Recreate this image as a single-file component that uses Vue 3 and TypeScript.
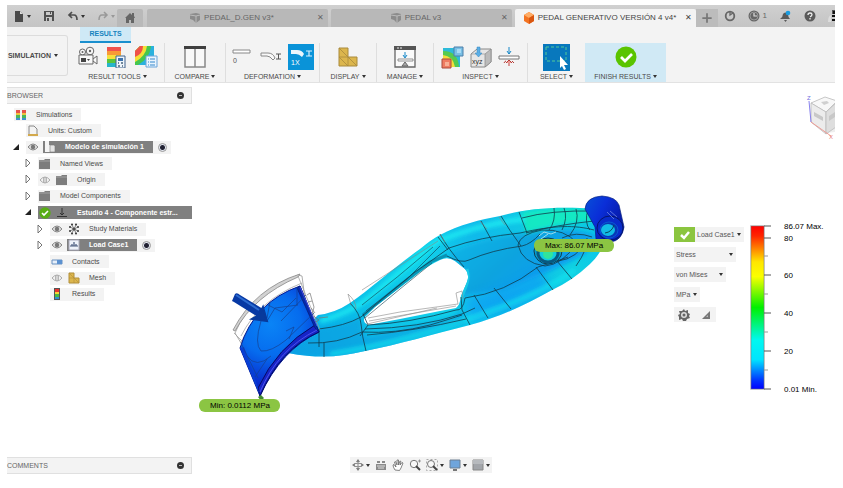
<script setup lang="ts">
import { ref } from 'vue'

interface Tool { icon: string; w: number; label: string; active?: boolean }
interface Group { name: string; cls: string; tools: Tool[] }
interface Node {
  text: string; depth: number; icon: string
  open?: 'closed' | 'open'; eye?: 'on' | 'off'; check?: boolean; dark?: boolean; radio?: boolean
}

const art: Record<string, string> = {
  file: '<path d="M2 1h5l3 3v8H2z" fill="#4a4a4a"/><path d="M7 1v3h3z" fill="#ddd"/>',
  save: '<path d="M1 1h10v10H1z" fill="#505050"/><path d="M3 2h6v3H3zM3 7h6v4H3z" fill="#c9c9c9"/><path d="M4 8h2v3H4zM7 2h1v2H7z" fill="#505050"/>',
  undo: '<path d="M5 2 2 5l3 3M2 5h5q3 0 3 5" fill="none" stroke="#4d4d4d" stroke-width="1.7"/>',
  redo: '<path d="M7 2l3 3-3 3M10 5H5q-3 0-3 5" fill="none" stroke="#999" stroke-width="1.5"/>',
  home: '<path d="M1 6 6 1l2 2V1h2v3l1 2h-1v5H7V8H5v3H2V6z" fill="#666"/>',
  cube: '<path d="M1 2 7 1l4 1v6l-4 3-3-3-3-1z" fill="#8b8b8b"/><path d="M1 3l6 1v7M7 4l4-1" stroke="#bbb" fill="none"/>',
  orange: '<path d="M6 0l5 3v6l-5 3-5-3V3z" fill="#f37321"/><path d="M6 0l5 3-5 3-5-3z" fill="#ffad66"/><path d="M6 6l5-3v6l-5 3z" fill="#d95610"/>',
  plus: '<path d="M6 2v8M2 6h8" stroke="#777" stroke-width="1.5"/>',
  job: '<circle cx="6" cy="6" r="4.3" fill="none" stroke="#666" stroke-width="1.8"/><path d="M6 1v4l3-2" stroke="#666" fill="none" stroke-width="1.3"/>',
  clock: '<circle cx="6" cy="6" r="5.5" fill="#666"/><circle cx="6" cy="6" r="4" fill="none" stroke="#bbb" stroke-width=".6"/><path d="M6 3v3h3" stroke="#ddd" fill="none" stroke-width="1.2"/>',
  bell: '<path d="M1 9q3-2 3-5 2-3 5 0 0 3 2 5zM5 10h3l-1.500 2z" fill="#5a5a5a"/><circle cx="9" cy="3" r="2.300" fill="#1a9ce0"/>',
  help: '<circle cx="6" cy="6" r="5.500" fill="#5a5a5a"/><path d="M4 5q0-2 2-2t2 1.500Q8 6 6 6.800M6 8v1.500" stroke="#eee" stroke-width="1.300" fill="none"/>',
  avatar: '<path d="M4 0h3v4H4z" fill="#555"/><path d="M5 1h2v3H5zM4 5h3v2H4zM4 9h3v2H4z" fill="#111"/><path d="M0 12q0-6 3-7v7z" fill="#ddd"/>',
  camera: '<g fill="#f8f8f8" stroke="#666"><circle cx="4.500" cy="6" r="3"/><circle cx="12" cy="5" r="3.800"/><path d="M1 9h14v9H1zM15 13l4-3v8l-4-3"/></g><circle cx="4.500" cy="6" r="1" fill="#666"/><circle cx="12" cy="5" r="1.200" fill="#666"/><path d="M3 12h5v4H3zM9 13h3l-1.500 2z" fill="#444"/>',
  resultcalc: '<path d="M1 1h14v4H1z" fill="#f0524d"/><path d="M1 5h14v4H1z" fill="#f89a37"/><path d="M1 9h14v5H1z" fill="#f7e03d"/><path d="M1 13h14v4H1z" fill="#5ac53a"/><path d="M1 17h14v4H1z" fill="#27b5c9"/><path d="M10 10h9v12h-9z" fill="#eef5fb" stroke="#42638d"/><path d="M12 12h5v3h-5z" fill="#3e73ae"/><path d="M12 17h1m2 0h2m-5 3h2m2 0h1" stroke="#47617c" stroke-width="1.300"/>',
  contour: '<path d="M1 6 6 1h14v14l-5 5H1z" fill="#2ab1dd"/><path d="M1 6 6 1h11q-1 12-13 19H1z" fill="#46c64e"/><path d="M1 6 6 1h7Q12 11 1 17z" fill="#f5df35"/><path d="M1 6l5-5h3Q9 9 1 12z" fill="#ef5149"/><path d="M12 11h11v11H12z" fill="#e9f4fd" stroke="#6aa5da"/><path d="M14 14h1m1 0h5m-7 3h1m1 0h5m-7 3h1m1 0h5" stroke="#3387cc"/>',
  compare: '<path d="M1 2h20v19H1zM11 2v19" fill="#f8f8f8" stroke="#888" stroke-width="1.500"/><path d="M0 0h22v3H0z" fill="#3f3f3f"/>',
  def0: '<path d="M1 4h17v3H1z" fill="#fff" stroke="#888"/><text x="1" y="17" font-size="7" fill="#555">0</text>',
  def1: '<path d="M1 7h7q5 0 7 5l-2 2q-3-4-6-4H1z" fill="#f8f8f8" stroke="#888"/><path d="M16 8h5M16 13h5M18.500 8v5" stroke="#555"/>',
  defx: '<path d="M3 6h6q5 0 7 4l-2 3q-3-3-6-3H3z" fill="#eaf5fc"/><path d="M18 7h6M18 12h6M21 7v5" stroke="#d8effd" stroke-width="1.200"/><text x="3" y="21" font-size="7" fill="#fff">1X</text>',
  display: '<path d="M1 1h9v9h9v9H1z" fill="#dcb64d" stroke="#a98a3d"/><path d="M1 10h9v9M1 1l9 9 9 9M1 10l9 9" fill="none" stroke="#a98a3d" stroke-width=".8"/>',
  manage: '<path d="M1 1h20v20H1z" fill="#fafafa" stroke="#666" stroke-width="1.300"/><path d="M0 0h22v4H0z" fill="#555"/><path d="M3 2h2m1 0h2" stroke="#eee"/><path d="M4 13h15v2H4z" fill="#fff" stroke="#777" stroke-width=".8"/><path d="M11 6v5m-2-2 2 3 2-3" stroke="#1687c7" fill="none"/><path d="m11 16 3 4H8z" fill="#aaa" stroke="#666"/>',
  region: '<path d="M2 2h17v19H2z" fill="#2dbbd9"/><path d="M2 5q15 0 16 16H2z" fill="#55ca51"/><path d="M2 9q10 1 12 12H2z" fill="#f3de3c"/><path d="M13 1h9v9h-9z" fill="#79bfe5" stroke="#4c7fa9"/><path d="M1 13h9v9H1z" fill="#ef7c62" stroke="#a94b3b"/><path d="M4 16h4v4H4z" fill="#f8b095"/><path d="M16 3h4v4h-4z" fill="#a8dbf5"/>',
  xyz: '<path d="M1 8 7 3h14v13l-6 5H1z" fill="#e6e6e6" stroke="#888"/><path d="M15 8v13l6-5V3z" fill="#bbb" stroke="#888" stroke-width=".7"/><path d="M1 8h14" stroke="#999" stroke-width=".7"/><path d="M7 1h3v6h2l-3.500 4L5 7h2z" fill="#5aaee6" stroke="#3585bf" stroke-width=".5"/><text x="2" y="18" font-size="7" fill="#333">xyz</text>',
  probe: '<path d="M1 10h20v3H1z" fill="#fff" stroke="#777"/><path d="M11 1v7M9 5l2 3 2-3" stroke="#1687c7" fill="none"/><path d="M11 20v-5" stroke="#c13d38"/><path d="m8 17 3-3 3 3" fill="#ee9a94" stroke="#b53d38"/><path d="M6 17q1-2 2-2m6 0 2 2" stroke="#b53d38" fill="none"/>',
  select: '<path d="M0 0h27v27H0z" fill="#0878bd"/><path d="M3 3h20v14H3z" fill="none" stroke="#53c998" stroke-dasharray="3 2"/><path d="m17 12 8 9h-4l2 4-2 1-2-4-2 2z" fill="#fff"/>',
  finish: '<circle cx="11" cy="11" r="10.500" fill="#5ac400"/><path d="m6 11 4 4 7-7" stroke="#fff" stroke-width="2.700" fill="none"/>',
  sim: '<path d="M1 1h10v10H1z" fill="#888"/><path d="M1 1h4v3H1zM7 1h4v3H7z" fill="#e65349"/><path d="M1 4h4v2H1zM7 4h4v2H7z" fill="#f0c13e"/><path d="M1 6h4v3H1zM7 6h4v3H7z" fill="#4bb758"/><path d="M1 9h4v2H1zM7 9h4v2H7z" fill="#408fce"/><path d="M5 1h2v10H5z" fill="#f3f3f3"/>',
  units: '<path d="M2 1h5l3 3v6H2z" fill="#f3f3f3" stroke="#888"/><path d="M1 9h10v2H1z" fill="#d3a94c"/>',
  model: '<path d="M1 0h4v4h1v7H1z" fill="#f4f4f4"/><path d="M6 4h4l1 1v6H6z" fill="#e4e4e4" stroke="#777" stroke-width=".6"/>',
  folder: '<path d="M0 2h5l1-1h5v10H0z" fill="#7d7d7d"/><path d="M0 3h11" stroke="#b4b4b4" stroke-width=".7"/>',
  study: '<path d="M1 9h10v1H1z" fill="#333"/><path d="M6 1v7M4 6l2 2 2-2" stroke="#333" fill="none"/>',
  material: '<g fill="#333"><circle cx="6" cy="6" r="1.500"/><circle cx="2" cy="4" r="1"/><circle cx="2" cy="8" r="1"/><circle cx="10" cy="4" r="1"/><circle cx="10" cy="8" r="1"/><circle cx="4" cy="1.500" r="1"/><circle cx="8" cy="1.500" r="1"/><circle cx="4" cy="10.500" r="1"/><circle cx="8" cy="10.500" r="1"/></g><path d="m2 4 8 4m0-4-8 4m2-6 4 8m0-8-4 8" stroke="#555" stroke-width=".7"/>',
  load: '<path d="M1 1h10v10H1z" fill="#eef2fa" stroke="#aab"/><path d="M2 7h8M6 3v4M4 5v2m4-2v2" stroke="#47587c" stroke-width="1.200"/>',
  contact: '<path d="M1 4h10v4H1z" fill="#e6effa" stroke="#6990bf"/><path d="M6 4h5v4H6z" fill="#5b91d0"/>',
  mesh: '<path d="M1 1h5v5h5v5H1z" fill="#dcb64d" stroke="#b28f3b"/><path d="m1 1 10 10M6 6v5M1 6h5" stroke="#b28f3b" stroke-width=".6"/>',
  results: '<path d="M3 0h6v12H3z" fill="#555"/><path d="M4 1h4v3H4z" fill="#e9332c"/><path d="M4 4h4v2H4z" fill="#f5d436"/><path d="M4 6h4v3H4z" fill="#4bbb41"/><path d="M4 9h4v2H4z" fill="#2f91d0"/>',
  on: '<path d="M1 6q5-6 10 0-5 6-10 0z" fill="#ddd" stroke="#888"/><circle cx="6" cy="6" r="2.200" fill="#777"/>',
  off: '<path d="M1 6q5-6 10 0-5 6-10 0z" fill="none" stroke="#999" stroke-width=".8"/><path d="M4.500 4v4M6 3v6M7.500 4v4" stroke="#999" stroke-width=".7"/>',
  check: '<circle cx="6" cy="6" r="5.700" fill="#58ad14"/><path d="m3 6 2 2 4-4" stroke="#fff" stroke-width="1.600" fill="none"/>',
  closed: '<path d="m3 2 4 4-4 4z" fill="#fff" stroke="#666" stroke-width=".9"/>',
  open: '<path d="M8 3v6H2z" fill="#222"/>',
  orbit: '<path d="M6 0 8 3H4zM6 12l2-3H4zM0 6l3-2v4zM12 6 9 4v4z" fill="#777"/><ellipse cx="6" cy="6" rx="4" ry="1.800" fill="none" stroke="#888"/><path d="M6 2v8" stroke="#888"/>',
  look: '<path d="M1 5h10v6H1zM2 2h3v2H2zM7 2h3v2H7z" fill="#8a8a8a"/><path d="M2 7h8M3 9h6" stroke="#ddd"/>',
  hand: '<path d="M3 11Q1 8 1 6l1-.5L4 8 2.500 3l1-.5L5 6V1h1.500v5L8 2l1 .5L8 6l2-2.500 1 .5-2 5-1.500 2.500z" fill="#fff" stroke="#666" stroke-width=".8"/>',
  zoom: '<circle cx="5" cy="5" r="3.700" fill="#f8f8f8" stroke="#777"/><path d="m7 7 4 4" stroke="#444" stroke-width="2"/><path d="M9 2h3M10.500.5v3" stroke="#888" stroke-width=".8"/>',
  fit: '<path d="M.5.5h11v11H.5z" fill="none" stroke="#aaa" stroke-dasharray="2 2"/><circle cx="5" cy="5" r="3.500" fill="#f8f8f8" stroke="#777"/><path d="m7 7 4 4" stroke="#444" stroke-width="2"/>',
  screen: '<path d="M1 1h10v8H1z" fill="#6fa5dc" stroke="#6d7f92"/><path d="M4 10h4v2H4z" fill="#777"/>',
  grid: '<path d="M1 1h10v10H1z" fill="#a2a5aa" stroke="#888"/><path d="M1 1h10v4H1z" fill="#b7babe"/>',
  gear: '<path d="m6 0 1 2 3-1 0 3 2 1-1 2 1 2-3 1-1 2H5L4 10l-3 1 0-3-1-2 2-1-1-3 3 0z" fill="#666"/><circle cx="6" cy="6" r="3" fill="#ddd"/><circle cx="6" cy="6" r="1.500" fill="#666"/>',
  slope: '<path d="M10 2v8H2z" fill="#777"/><path d="M8 6v2H6z" fill="#bbb"/>',
}

const groups: Group[] = [
  { name: 'RESULT TOOLS', cls: 'g-wide', tools: [
    { icon: 'camera', w: 22, label: 'Animate' }, { icon: 'resultcalc', w: 22, label: 'Result details' }, { icon: 'contour', w: 24, label: 'Contours' }] },
  { name: 'COMPARE', cls: 'g-61', tools: [{ icon: 'compare', w: 22, label: 'Compare' }] },
  { name: 'DEFORMATION', cls: 'g-wide', tools: [
    { icon: 'def0', w: 22, label: 'Undeformed' }, { icon: 'def1', w: 22, label: 'Actual' }, { icon: 'defx', w: 26, label: 'Adjusted 1X', active: true }] },
  { name: 'DISPLAY', cls: 'g-57', tools: [{ icon: 'display', w: 20, label: 'Mesh display' }] },
  { name: 'MANAGE', cls: 'g-57', tools: [{ icon: 'manage', w: 22, label: 'Manage' }] },
  { name: 'INSPECT', cls: 'g-wide', tools: [
    { icon: 'region', w: 23, label: 'Min and max' }, { icon: 'xyz', w: 22, label: 'Reactions' }, { icon: 'probe', w: 22, label: 'Probe' }] },
  { name: 'SELECT', cls: 'g-57 last', tools: [{ icon: 'select', w: 27, label: 'Select' }] },
  { name: 'FINISH RESULTS', cls: 'g-finish last', tools: [{ icon: 'finish', w: 22, label: 'Finish results' }] },
]

const nodes: Node[] = [
  { text: 'Simulations', depth: 0, icon: 'sim' },
  { text: 'Units: Custom', depth: 1, icon: 'units' },
  { text: 'Modelo de simulación 1', depth: 1, icon: 'model', open: 'open', eye: 'on', dark: true, radio: true },
  { text: 'Named Views', depth: 2, icon: 'folder', open: 'closed' },
  { text: 'Origin', depth: 2, icon: 'folder', open: 'closed', eye: 'off' },
  { text: 'Model Components', depth: 2, icon: 'folder', open: 'closed' },
  { text: 'Estudio 4 - Componente estr...', depth: 2, icon: 'study', open: 'open', check: true, dark: true },
  { text: 'Study Materials', depth: 3, icon: 'material', open: 'closed', eye: 'on' },
  { text: 'Load Case1', depth: 3, icon: 'load', open: 'closed', eye: 'on', dark: true, radio: true },
  { text: 'Contacts', depth: 3, icon: 'contact' },
  { text: 'Mesh', depth: 3, icon: 'mesh', eye: 'off' },
  { text: 'Results', depth: 3, icon: 'results' },
]

const navTools = [
  { icon: 'orbit', label: 'Orbit', more: true }, { icon: 'look', label: 'Look at' }, { icon: 'hand', label: 'Pan' },
  { icon: 'zoom', label: 'Zoom' }, { icon: 'fit', label: 'Fit', more: true },
  { icon: 'screen', label: 'Display settings', more: true }, { icon: 'grid', label: 'Grid settings', more: true },
]

const loadCase = ref('Load Case1')
const quantity = ref('Stress')
const measure = ref('von Mises')
const unit = ref('MPa')

const majorTicks = [226, 238, 275, 313, 351, 389]
const minorTicks = [256, 294, 332, 370]
const scale = [
  { y: 226, t: '86.07 Max.' }, { y: 238, t: '80' }, { y: 275, t: '60' },
  { y: 313, t: '40' }, { y: 351, t: '20' }, { y: 389, t: '0.01 Min.' },
]
</script>

<template>
  <div class="app">
    <header class="tabs">
      <div class="quick">
        <button aria-label="File"><svg class="i12" viewBox="0 0 12 12" v-html="art.file" /><i class="caret" /></button>
        <button aria-label="Save"><svg class="i12" viewBox="0 0 12 12" v-html="art.save" /></button>
        <button aria-label="Undo"><svg class="i12" viewBox="0 0 12 12" v-html="art.undo" /><i class="caret" /></button>
        <button aria-label="Redo"><svg class="i12" viewBox="0 0 12 12" v-html="art.redo" /><i class="caret pale" /></button>
      </div>
      <button class="home" aria-label="Home"><svg class="i12" viewBox="0 0 12 12" v-html="art.home" /></button>
      <div class="tab"><svg class="i12" viewBox="0 0 12 12" v-html="art.cube" /><span>PEDAL_D.GEN v3*</span><button class="close" aria-label="Close PEDAL_D.GEN">✕</button></div>
      <div class="tab"><svg class="i12" viewBox="0 0 12 12" v-html="art.cube" /><span>PEDAL v3</span><button class="close" aria-label="Close PEDAL">✕</button></div>
      <div class="tab current"><svg class="i12" viewBox="0 0 12 12" v-html="art.orange" /><span>PEDAL GENERATIVO VERSIÓN 4 v4*</span><button class="close" aria-label="Close PEDAL GENERATIVO">✕</button></div>
      <button class="add" aria-label="New design"><svg class="i14" viewBox="0 0 12 12" v-html="art.plus" /></button>
      <div class="status">
        <button aria-label="Extensions"><svg class="i12" viewBox="0 0 12 12" v-html="art.job" /></button>
        <button aria-label="Job status"><svg class="i12" viewBox="0 0 12 12" v-html="art.clock" />1</button>
        <button aria-label="Notifications"><svg class="i12" viewBox="0 0 12 12" v-html="art.bell" /></button>
        <button aria-label="Help"><svg class="i12" viewBox="0 0 12 12" v-html="art.help" /></button>
        <button aria-label="Account"><svg class="avatar" viewBox="0 0 7 12" v-html="art.avatar" /></button>
      </div>
    </header>

    <section class="ribbon">
      <button class="workspace">SIMULATION<i class="caret" /></button>
      <div class="panel">
        <button class="mode">RESULTS</button>
        <div class="groups">
          <div v-for="g in groups" :key="g.name" class="group" :class="g.cls">
            <div class="tools">
              <button v-for="t in g.tools" :key="t.icon" :class="{ active: t.active }" :aria-label="t.label">
                <svg :width="t.w" :height="t.w" :viewBox="`0 0 ${t.w} ${t.w}`" v-html="art[t.icon]" />
              </button>
            </div>
            <button class="caption">{{ g.name }}<i class="caret" /></button>
          </div>
        </div>
      </div>
    </section>

    <main class="work">
      <aside class="side">
        <div class="bar">BROWSER<button class="dot" aria-label="Collapse browser" /></div>
        <ul class="tree">
          <li v-for="n in nodes" :key="n.text" :class="'d' + n.depth">
            <span v-if="n.depth > 0" class="twist"><svg v-if="n.open" class="i12" viewBox="0 0 12 12" v-html="art[n.open]" /></span>
            <div class="node" :class="{ full: n.check }">
              <button v-if="n.eye" class="eye" :aria-label="'Visibility of ' + n.text"><svg class="i12" viewBox="0 0 12 12" v-html="art[n.eye]" /></button>
              <span v-if="n.check" class="eye"><svg class="i12" viewBox="0 0 12 12" v-html="art.check" /></span>
              <button class="entry" :class="{ dark: n.dark }"><span class="pic"><svg class="i12" viewBox="0 0 12 12" v-html="art[n.icon]" /></span>{{ n.text }}</button>
              <input v-if="n.radio" type="radio" :name="'active' + n.depth" checked :aria-label="'Activate ' + n.text">
            </div>
          </li>
        </ul>
        <div class="bar comments">COMMENTS<button class="dot" aria-label="Expand comments" /></div>
      </aside>

      <section class="stage">
        <svg class="model" viewBox="192 84 482 368" role="img" aria-label="Stress plot of the pedal">
          <defs>
            <linearGradient id="body" x1="290" y1="350" x2="610" y2="215" gradientUnits="userSpaceOnUse">
              <stop offset="0" stop-color="#08a6ea" /><stop offset=".2" stop-color="#0bbce8" /><stop offset=".45" stop-color="#11d1ea" /><stop offset=".62" stop-color="#10b9ea" /><stop offset=".85" stop-color="#10d0e2" /><stop offset="1" stop-color="#08c0ec" />
            </linearGradient>
            <linearGradient id="web" x1="460" y1="240" x2="520" y2="310" gradientUnits="userSpaceOnUse">
              <stop offset="0" stop-color="#0db4e6" /><stop offset=".5" stop-color="#0ba4df" /><stop offset="1" stop-color="#0a9cf0" />
            </linearGradient>
            <radialGradient id="pad" cx="270" cy="325" r="62" gradientUnits="userSpaceOnUse">
              <stop offset="0" stop-color="#0a84f6" /><stop offset=".5" stop-color="#066cee" /><stop offset="1" stop-color="#0828cc" />
            </radialGradient>
            <linearGradient id="boss" x1="586" y1="205" x2="622" y2="225" gradientUnits="userSpaceOnUse">
              <stop offset="0" stop-color="#0848d8" /><stop offset=".4" stop-color="#0a2ed8" /><stop offset="1" stop-color="#0618a2" />
            </linearGradient>
            <filter id="soft"><feGaussianBlur stdDeviation="5" /></filter>
            <filter id="edge"><feGaussianBlur stdDeviation="2" /></filter>
            <clipPath id="shape"><path clip-rule="evenodd" d="M288 346 L318 316 Q335 314 350 304 C370 290 400 264 420 250 Q432 240 440 236 C460 225 480 221 500 217 C525 210 555 207 595 210 L605 238 Q603 253 590 265 Q572 282 552 291 C525 306 500 318 470 326 C430 336 400 345 365 352 C340 358 320 360 288 354Z M365 318 Q362 323 368 326 L400 320 L440 312 L456 309 Q460 306 461 297 L467 283 Q470 275 465 270 L455 262 Q448 257 440 261 Q427 267 415 277 L375 308Z" /></clipPath>
          </defs>

          <g clip-path="url(#shape)">
            <path d="M280 200H620V365H280Z" fill="url(#body)" />
            <path d="M318 330Q345 326 360 318L362 332 368 338 450 318 461 312 466 325 400 345 350 358 285 356Z" fill="#079fe0" opacity=".65" filter="url(#edge)" />
            <path d="M447 255Q490 236 530 234Q570 225 597 238L585 255 550 272 505 291 461 297 468 275Z" fill="url(#web)" filter="url(#edge)" />
            <path d="M465 300 506 289 540 272 552 291 515 308 470 323Z" fill="#0c98f6" opacity=".6" filter="url(#soft)" />
            <path d="M521 213Q555 207 590 210L596 222Q560 223 526 234Z" fill="#13f0bb" opacity=".8" filter="url(#edge)" />
            <path d="M320 322Q350 314 370 298L438 242Q480 225 525 220" fill="none" stroke="#20f4f4" stroke-width="5" opacity=".75" filter="url(#edge)" />
            <path d="M330 355Q370 349 410 338T485 314Q540 295 575 271" fill="none" stroke="#15e6ef" stroke-width="4" opacity=".8" filter="url(#edge)" />
            <path d="M363 316 400 286 430 263 447 256" fill="none" stroke="#057a9a" stroke-width="3" opacity=".65" />
            <path d="M467 270Q470 280 465 290L461 300" fill="none" stroke="#20dcea" stroke-width="3" opacity=".6" />
          </g>

          <g fill="none" stroke="#123b4c" stroke-width=".8">
            <path d="M319 330Q345 327 361 318Q388 295 415 273Q434 260 449 249Q480 238 520 234C555 226 575 226 594 231" />
            <path d="M308 344Q338 345 362 333Q395 335 430 326Q450 320 462 316" />
            <path d="M368 326Q410 324 456 311Q463 312 465 299Q505 294 538 268Q555 263 568 258" />
            <path d="M365 330Q420 329 462 315L475 309M367 336Q415 332 466 320" />
            <path d="M440 235Q448 250 464 268M438 238 448 251M481 222 492 242M501 217Q509 231 521 247M519 213 527 234M554 209Q556 222 549 231M564 209Q568 219 562 231M576 210Q580 223 570 236M588 210Q584 224 590 231" />
            <path d="M447 257Q462 265 469 261Q492 251 522 247Q531 245 540 235" />
            <path d="M522 219Q550 211 596 212M526 234Q555 226 594 222" />
            <path d="M461 298 462 311 470 326M474 296 488 319M494 289 511 310M536 268 553 291M557 262 572 280" />
            <path d="M350 304Q360 314 361 325 362 337 366 352M363 315 368 326 360 337M324 344V358M319 330V348" />
            <path d="M365 319 400 290 432 264M366 312 407 280 440 247M362 306Q397 279 433 248" stroke-width=".6" />
            <path d="M518 246Q520 235 542 231 565 230 577 244Q562 266 545 267 522 264 518 246M576 267Q588 250 587 239M558 262Q577 260 588 240M562 239Q576 232 592 238" />
          </g>
          <g fill="none" stroke="#888" stroke-width=".6">
            <path d="M362 291 438 242M351 306 348 295Q356 302 356 310M368 319 400 313 458 305M369 322 456 307M367 325 437 309M458 305 456 294 462 292 463 300M440 235 445 243M480 222 487 230M499 218 505 226" />
          </g>

          <ellipse cx="548" cy="252" rx="14" ry="13" fill="#079fd0" stroke="#123b4c" />
          <ellipse cx="548" cy="254" rx="10" ry="9" fill="#11cddd" stroke="#075982" stroke-width="3" />
          <circle cx="548" cy="255" r="5" fill="#32e49b" />
          <path d="M539 237 544 233 551 235 556 233M541 240 548 235" stroke="#9fdcea" stroke-width="1" fill="none" />
          <path d="M585 210Q586 198 602 197 616 198 619 206L624 228Q622 242 610 243L596 240 595 228Z" fill="url(#boss)" stroke="#062080" stroke-width=".7" />
          <ellipse cx="610" cy="229" rx="13" ry="12" fill="#082bca" stroke="#05156e" />
          <ellipse cx="609" cy="231" rx="9" ry="8" fill="#0638b7" stroke="#0a73e3" stroke-width=".6" />
          <ellipse cx="608" cy="231" rx="7" ry="6" fill="#12bce6" />
          <path d="M605 234Q612 233 614 226" fill="none" stroke="#05465f" />
          <path d="m607 213 7 7m-4-8 7 6" stroke="#6c85e5" stroke-width=".8" />

          <path d="M235 334Q252 294 298 276L302 277 305 300 286 300Q257 308 241 344Z" fill="#fff" stroke="#999" stroke-width=".8" />
          <path d="M235 332Q254 297 298 278L300 275Q255 289 233 331Z" fill="#d2d2d2" stroke="#888" stroke-width=".8" />
          <path d="M241 337Q259 301 302 284M234 334 244 344 M298 277 320 331M247 334Q262 307 300 291" fill="none" stroke="#999" stroke-width=".7" />
          <path d="M307 296 310 294 314 308 312 316 319 321 314 324M308 303 312 302M311 309 315 314M319 319 328 318" fill="none" stroke="#777" stroke-width=".7" />
          <path d="M240 349Q254 303 300 287L319 333Q281 351 260 397Z" fill="url(#pad)" stroke="#051993" />
          <path d="M319 333Q280 350 260 397L258 389Q277 348 315 326Z" fill="#1624c7" stroke="#060b65" />
          <path d="M240 349 260 397 257 386 244 348Z" fill="#083fd4" />
          <path d="M300 287 319 333 315 329 297 289Z" fill="#0629ac" stroke="#051b75" stroke-width=".7" />
          <path d="M317 331Q278 350 260 393M300 288 317 327" fill="none" stroke="#5b5cf3" stroke-width=".8" />
          <g fill="none" stroke="#164090" stroke-width=".7">
            <path d="M261 322Q254 345 261 352 271 353 286 341L314 314M267 322 275 309 298 306M268 306 282 313 296 299M270 303 267 319M241 344 258 379M247 357Q256 370 271 357M255 378 267 360M286 332 294 328 289 340M297 288V306M306 296 281 322" />
          </g>
          <path d="M232 302 235 295Q237 293 240 296L263 310 258 318 234 303Z" fill="#0739a4" />
          <path d="M236 296 259 311" stroke="#2b6bd0" stroke-width="2" />
          <path d="M263 308 267 322 252 320 259 316Z" fill="#083a9c" stroke="#083a9c" stroke-width="2" />
          <path d="m258 398 3-2 3 3-3 3z" fill="#438a31" />

          <rect x="199" y="400" width="81" height="13" rx="6" fill="#8bc543" />
          <text x="240" y="409" class="tag">Min: 0.0112 MPa</text>
          <rect x="534" y="240" width="80" height="13" rx="6" fill="#8bc543" />
          <text x="574" y="249" class="tag">Max: 86.07 MPa</text>
        </svg>
        <nav class="nav">
          <button v-for="t in navTools" :key="t.icon" :aria-label="t.label"><svg class="i12" viewBox="0 0 12 12" v-html="art[t.icon]" /><i v-if="t.more" class="caret" /></button>
        </nav>
      </section>

      <aside class="inspector">
        <svg class="viewcube" viewBox="804 90 31 50" role="img" aria-label="View cube">
          <path d="m811 103 14-6 10 3v32l-9 1-15-11Z" fill="#eee" />
          <path d="m811 103 14-6 12 4-11 11Z" fill="#f8f8f8" stroke="#bbb" stroke-width=".8" />
          <path d="m811 103 15 9v22l-15-12Z" fill="#ececec" stroke="#bbb" stroke-width=".8" />
          <path d="m826 112 10-9v24l-10 7Z" fill="#dedede" stroke="#bbb" stroke-width=".8" />
          <path d="m814 112 9 5v4l-9-5zM829 116l6-4v5l-6 4z" fill="#c8c8c8" />
          <path d="m821 102 6-1 2 2-5 2z" fill="#d0d0d0" />
          <path d="M809 101 811 122" stroke="#8882ee" /><path d="m811 122 20 14" stroke="#ef9c95" />
          <text x="807" y="100" fill="#7470e0" font-size="6">Z</text><text x="829" y="139" fill="#e57b75" font-size="6">X</text>
        </svg>
        <div class="legend">
          <div class="controls">
            <div class="row"><span class="ok"><svg class="i12" viewBox="0 0 12 12"><path d="m2 6 3 3 5-6" fill="none" stroke="#fff" stroke-width="2.500" /></svg></span>
              <label class="pick w-case"><select v-model="loadCase" aria-label="Load case"><option>Load Case1</option></select><i class="caret" /></label></div>
            <label class="pick w-stress"><select v-model="quantity" aria-label="Result"><option>Stress</option></select><i class="caret" /></label>
            <label class="pick w-mises"><select v-model="measure" aria-label="Measure"><option>von Mises</option></select><i class="caret" /></label>
            <label class="pick w-unit"><select v-model="unit" aria-label="Unit"><option>MPa</option></select><i class="caret" /></label>
            <div class="opts"><button aria-label="Legend options"><svg class="i12" viewBox="0 0 12 12" v-html="art.gear" /></button><button aria-label="Legend size"><svg class="i12" viewBox="0 0 12 12" v-html="art.slope" /></button></div>
          </div>
          <svg class="scale" viewBox="746 220 89 174" role="img" aria-label="Stress scale">
            <defs><linearGradient id="ramp" x1="0" y1="0" x2="0" y2="1">
              <stop offset="0" stop-color="#f00" /><stop offset=".06" stop-color="#ff2400" /><stop offset=".22" stop-color="#ffe600" /><stop offset=".31" stop-color="#faff00" /><stop offset=".5" stop-color="#00f000" /><stop offset=".7" stop-color="#00f8f0" /><stop offset=".82" stop-color="#00e4ff" /><stop offset=".95" stop-color="#0030ff" /><stop offset="1" stop-color="#00f" />
            </linearGradient></defs>
            <rect x="750" y="225" width="15" height="165" fill="#ddd" />
            <rect x="751" y="226" width="13" height="163" fill="url(#ramp)" stroke="#777" stroke-width=".5" />
            <path v-for="y in majorTicks" :key="y" :d="`M764 ${y}h7`" stroke="#555" />
            <path v-for="y in minorTicks" :key="y" :d="`M764 ${y}h4`" stroke="#999" />
            <text v-for="s in scale" :key="s.y" x="784" :y="s.y + 3" class="value">{{ s.t }}</text>
          </svg>
        </div>
      </aside>
    </main>
  </div>
</template>

<style>
body { margin: 0; background: #fff; }
</style>

<style scoped>
.app { box-sizing: border-box; min-height: 100vh; padding: 5px 8px 8px 7px; display: flex; flex-direction: column; font: 7px/10px "Liberation Sans", Arial, sans-serif; color: #4a4a4a; overflow: hidden; }
button, select { font: inherit; color: inherit; border: 0; background: none; padding: 0; margin: 0; }
button { display: flex; align-items: center; justify-content: center; }
svg { display: block; flex: none; }
.i12 { width: 12px; height: 12px; }
.i14 { width: 14px; height: 14px; }
.caret { flex: none; width: 0; height: 0; border: 2px solid transparent; border-top: 3px solid #333; border-bottom: 0; margin-left: 3px; }
.pale { border-top-color: #999; }

.tabs { display: flex; height: 22px; background: linear-gradient(#d0d0d0, #c4c4c4); font-size: 8px; color: #666; flex: none; }
.quick { width: 110px; display: flex; align-items: center; gap: 12px; padding-left: 6px; box-sizing: border-box; flex: none; }
.quick .caret { margin-left: 2px; }
.home { width: 26px; flex: none; background: #b9b9b9; margin: 4px 4px 0 0; border-radius: 2px 2px 0 0; }
.tab { flex: 0 1 181px; box-sizing: border-box; padding-right: 12px; display: flex; align-items: center; justify-content: center; gap: 3px; background: #b8b8b8; margin: 4px 3px 0 0; border-radius: 2px 2px 0 0; position: relative; white-space: nowrap; }
.close { position: absolute; right: 4px; top: 0; bottom: 0; }
.current { background: #f3f3f3; color: #444; margin-right: 0; }
.add { width: 22px; flex: none; background: #bcbcbc; margin-top: 4px; }
.status { flex: 1; display: flex; align-items: center; justify-content: space-between; padding-left: 6px; }
.status button { gap: 2px; }
.avatar { width: 7px; height: 12px; }

.ribbon { display: flex; height: 56px; background: #f3f3f3; border-bottom: 1px solid #e2e2e2; box-sizing: border-box; flex: none; }
.workspace { width: 61px; height: 41px; margin: 8px 3px 0 0; padding-right: 9px; box-sizing: border-box; border: 1px solid #dcdcdc; border-left: 0; border-radius: 0 3px 3px 0; font-weight: bold; justify-content: flex-end; overflow: hidden; flex: none; }
.panel { flex: 1; min-width: 0; }
.mode { width: 51px; height: 16px; margin-left: 9px; background: #cfe9f6; border-bottom: 2px solid #1a8fce; color: #1683be; font-weight: bold; }
.groups { display: flex; height: 39px; }
.group { display: flex; flex-direction: column; align-items: center; box-sizing: border-box; border-right: 1px solid #dedede; flex: none; }
.g-wide { width: 94px; }
.g-61 { width: 61px; }
.g-57 { width: 57px; }
.last { border-right: 0; }
.g-finish { width: 81px; background: #d0e9f5; }
.tools { display: flex; gap: 6px; align-items: center; height: 28px; }
.active { background: #0a93d8; }
.caption { height: 11px; white-space: nowrap; }
.caption .caret { margin-left: 2px; }

.work { flex: 1; display: grid; grid-template-columns: 185px minmax(0, 1fr) 161px; }
.side { display: flex; flex-direction: column; padding-top: 4px; }
.bar { display: flex; align-items: center; justify-content: space-between; height: 17px; box-sizing: border-box; background: #f3f3f3; border: 1px solid #e0e0e0; border-left: 0; padding-right: 7px; color: #666; flex: none; }
.comments { margin: auto 0 6px; }
.dot { width: 7px; height: 7px; border-radius: 50%; background: #333; }
.dot::after { content: ""; width: 3px; height: 1px; background: #bbb; }
.tree { list-style: none; margin: 4px 0 0; padding: 0; height: 193px; display: flex; flex-direction: column; justify-content: space-between; flex: none; }
.tree li { display: flex; height: 13px; padding-left: 4px; }
.tree .d0 { padding-left: 7px; }
.tree .d2 { padding-left: 16px; }
.tree .d3 { padding-left: 28px; }
.twist { width: 15px; flex: none; }
.node { display: flex; align-items: center; background: #f3f3f3; white-space: nowrap; }
.eye { width: 17px; padding-left: 1px; box-sizing: border-box; justify-content: flex-start; flex: none; }
.entry { height: 12px; padding-right: 9px; }
.pic { width: 22px; padding-left: 1px; box-sizing: border-box; }
.dark { background: #808080; color: #fff; font-weight: bold; }
.full { flex: 1; background: #808080; }
.node input { appearance: none; width: 9px; height: 9px; margin: 0 4px 0 5px; border: 1px solid #999; border-radius: 50%; background: radial-gradient(circle, #223 0 2px, #e4e8f2 3px); }

.stage { display: flex; flex-direction: column; align-items: center; }
.model { width: 100%; max-width: 640px; }
.tag, .value { font: 8px "Liberation Sans", Arial, sans-serif; fill: #000; }
.tag { text-anchor: middle; }
.nav { display: flex; align-items: center; gap: 5px; height: 16px; margin: auto 24px 7px 0; padding: 0 2px; background: #f3f3f3; }
.nav .caret { margin-left: 2px; }

.inspector { display: flex; flex-direction: column; }
.viewcube { width: 31px; height: 50px; margin: 7px 0 0 auto; }
.legend { display: flex; justify-content: space-between; margin-top: 80px; }
.controls { display: flex; flex-direction: column; align-items: flex-start; gap: 5px; padding-top: 7px; }
.row { display: flex; }
.ok { display: grid; place-items: center; width: 21px; height: 15px; background: #8bc53f; }
.pick { display: flex; align-items: center; justify-content: space-between; height: 15px; box-sizing: border-box; background: #f3f3f3; padding: 0 3px 0 2px; color: #555; }
.pick select { appearance: none; outline: 0; }
.pick .caret { margin-left: 0; }
.w-case { width: 49px; }
.w-stress { width: 62px; }
.w-mises { width: 52px; }
.w-unit { width: 26px; }
.opts { display: flex; gap: 10px; height: 15px; padding: 0 4px; background: #f3f3f3; }
.scale { width: 89px; height: 174px; }
</style>
